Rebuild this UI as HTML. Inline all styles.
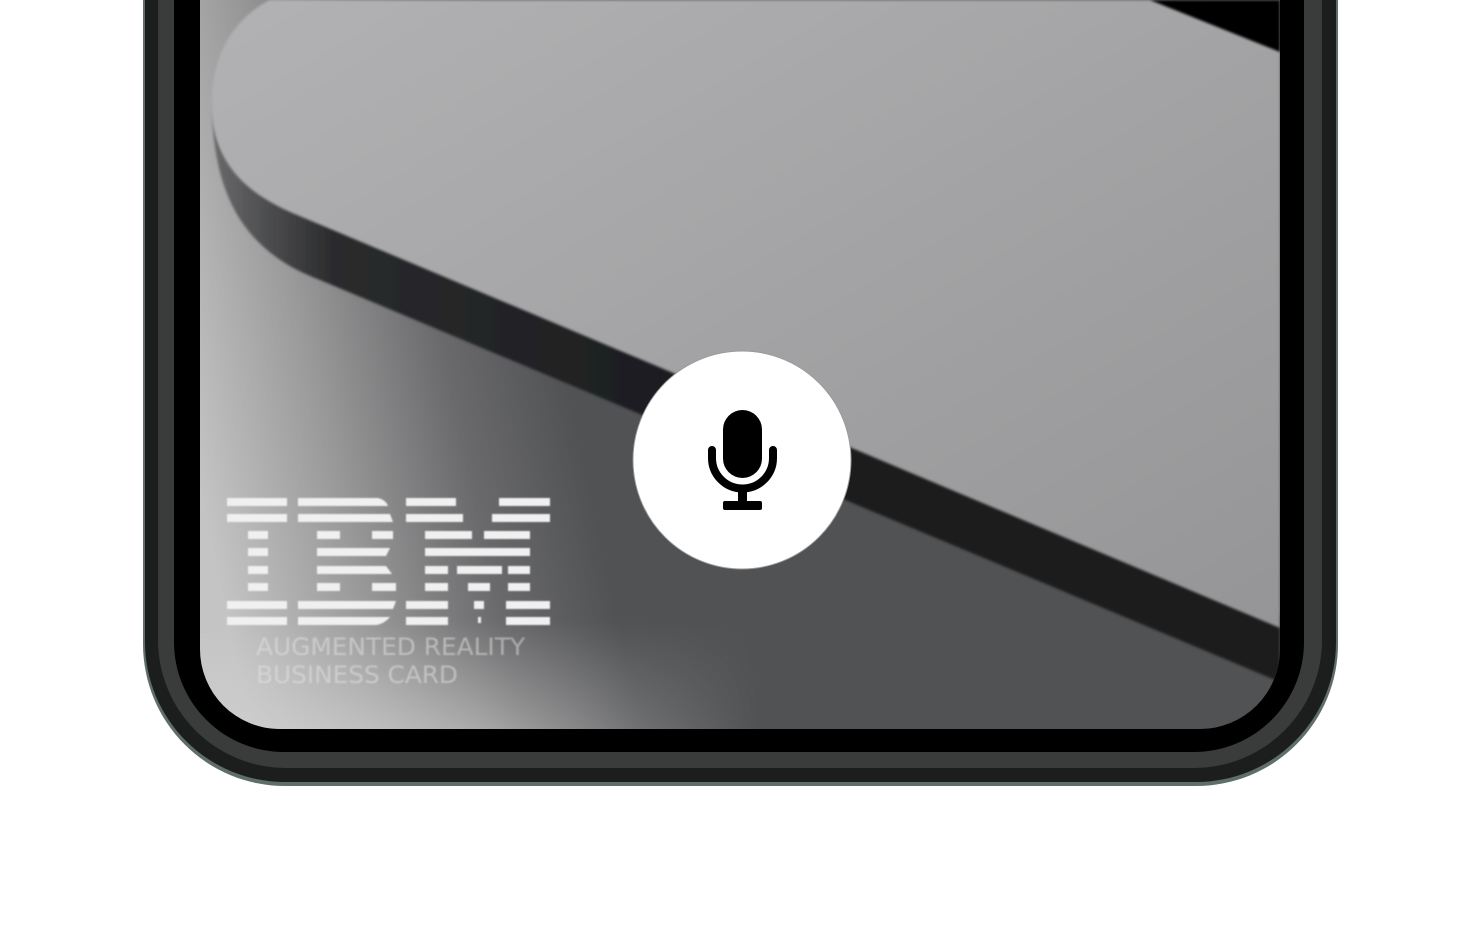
<!DOCTYPE html>
<html><head><meta charset="utf-8"><style>
html,body{margin:0;padding:0;background:#fff;width:1480px;height:929px;overflow:hidden;position:relative}
.l{position:absolute}
</style></head><body>
<div class="l" style="left:143px;top:-200px;width:1195px;height:986px;border-radius:0 0 142px 142px;background:#5f6e66"></div>
<div class="l" style="left:145px;top:-200px;width:1191px;height:982px;border-radius:0 0 140px 140px;background:#1c1d1d"></div>
<div class="l" style="left:158px;top:-200px;width:1164px;height:968px;border-radius:0 0 128px 128px;background:#3a3b3b"></div>
<div class="l" style="left:174px;top:-200px;width:1130px;height:952px;border-radius:0 0 110px 110px;background:#000"></div>
<svg class="l" style="left:0;top:0" width="1480" height="929" viewBox="0 0 1480 929">
<defs>
<clipPath id="scr"><path d="M200 0H1280V649A80 80 0 0 1 1200 729H280A80 80 0 0 1 200 649Z"/></clipPath>
<linearGradient id="bg" x1="205" y1="520" x2="580" y2="440" gradientUnits="userSpaceOnUse">
<stop offset="0" stop-color="#c4c4c4"/><stop offset="0.35" stop-color="#9a9a9b"/><stop offset="0.7" stop-color="#6a6a6c"/><stop offset="1" stop-color="#515254"/></linearGradient>
<linearGradient id="bot" x1="200" y1="0" x2="760" y2="0" gradientUnits="userSpaceOnUse">
<stop offset="0" stop-color="#cfcfcf" stop-opacity="0.9"/><stop offset="0.5" stop-color="#c8c8c8" stop-opacity="0.6"/><stop offset="1" stop-color="#c8c8c8" stop-opacity="0"/></linearGradient>
<linearGradient id="botv" x1="0" y1="620" x2="0" y2="730" gradientUnits="userSpaceOnUse">
<stop offset="0" stop-color="#fff" stop-opacity="0"/><stop offset="1" stop-color="#fff" stop-opacity="1"/></linearGradient>
<mask id="bm"><rect x="0" y="600" width="1480" height="140" fill="url(#botv)"/></mask>
<linearGradient id="card" x1="0" y1="0" x2="1" y2="1">
<stop offset="0" stop-color="#b2b2b4"/><stop offset="1" stop-color="#959597"/></linearGradient>
<linearGradient id="edge" x1="212" y1="0" x2="700" y2="0" gradientUnits="userSpaceOnUse">
<stop offset="0" stop-color="#6a6a6c"/><stop offset="0.25" stop-color="#2a2b2d"/><stop offset="1" stop-color="#1b1c1e"/></linearGradient>
<filter id="b"><feGaussianBlur stdDeviation="1.2"/></filter>
<filter id="b2"><feGaussianBlur stdDeviation="0.7"/></filter>
</defs>
<g clip-path="url(#scr)">
<rect x="200" y="0" width="1080" height="729" fill="url(#bg)"/>
<rect x="200" y="600" width="1080" height="140" fill="url(#bot)" mask="url(#bm)"/>
<path d="M212 100C212 190 240 250 320 280L1280 682V615L290 200C230 175 212 150 212 100Z" fill="url(#edge)" filter="url(#b)"/>
<path d="M270 0C230 20 212 60 212 100C212 150 230 185 290 212L1280 628V0Z" fill="url(#card)" filter="url(#b)"/>
<path d="M1150 0L1280 52V0Z" fill="#000" filter="url(#b)"/>
<g fill="#f0f0f0" filter="url(#b2)">
<rect x="227" y="498" width="60" height="8"/><rect x="227" y="514" width="60" height="8"/>
<rect x="248" y="531" width="20" height="8"/><rect x="248" y="548" width="20" height="8"/>
<rect x="248" y="566" width="20" height="8"/><rect x="248" y="583" width="20" height="8"/>
<rect x="227" y="601" width="60" height="8"/><rect x="227" y="617" width="60" height="8"/>
<path d="M298 498H378Q386 500 388 506H298Z"/><path d="M298 514H390L393 522H298Z"/>
<rect x="317" y="531" width="23" height="8"/><rect x="372" y="531" width="21" height="8"/>
<path d="M317 548H390L386 556H317Z"/><path d="M317 566H386L392 574H317Z"/>
<rect x="317" y="583" width="23" height="8"/><rect x="372" y="583" width="24" height="8"/>
<path d="M298 601H396L393 609H298Z"/><path d="M298 617H390Q384 624 376 625H298Z"/>
<rect x="406" y="498" width="50" height="8"/><rect x="499" y="498" width="51" height="8"/>
<rect x="406" y="514" width="57" height="8"/><rect x="492" y="514" width="58" height="8"/>
<rect x="425" y="531" width="47" height="8"/><rect x="484" y="531" width="46" height="8"/>
<rect x="425" y="548" width="105" height="8"/>
<rect x="425" y="566" width="23" height="8"/><rect x="457" y="566" width="45" height="8"/><rect x="508" y="566" width="22" height="8"/>
<rect x="425" y="583" width="23" height="8"/><rect x="468" y="583" width="22" height="8"/><rect x="508" y="583" width="22" height="8"/>
<rect x="406" y="601" width="42" height="8"/><rect x="474" y="601" width="10" height="8"/><rect x="506" y="601" width="44" height="8"/>
<rect x="406" y="617" width="42" height="8"/><rect x="478" y="617" width="3" height="6"/><rect x="506" y="617" width="44" height="8"/>
</g>
<g font-family="DejaVu Sans Condensed, Liberation Sans, sans-serif" font-size="24" fill="#e6e6e6" fill-opacity="0.5" filter="url(#b2)">
<text x="256" y="655" textLength="269" lengthAdjust="spacingAndGlyphs">AUGMENTED REALITY</text>
<text x="256" y="683" textLength="202" lengthAdjust="spacingAndGlyphs">BUSINESS CARD</text>
</g>
</g>
<circle cx="742" cy="460" r="109" fill="#fff" stroke="#9a9a9a" stroke-width="1"/>
<rect x="723" y="410" width="39" height="68" rx="19.5" fill="#000"/>
<path d="M712 450V458A30.5 30.5 0 0 0 773 458V450" fill="none" stroke="#000" stroke-width="8" stroke-linecap="round"/>
<rect x="738" y="486" width="9" height="18" fill="#000"/>
<rect x="723" y="501" width="39" height="9" rx="2" fill="#000"/>
</svg>
</body></html>
